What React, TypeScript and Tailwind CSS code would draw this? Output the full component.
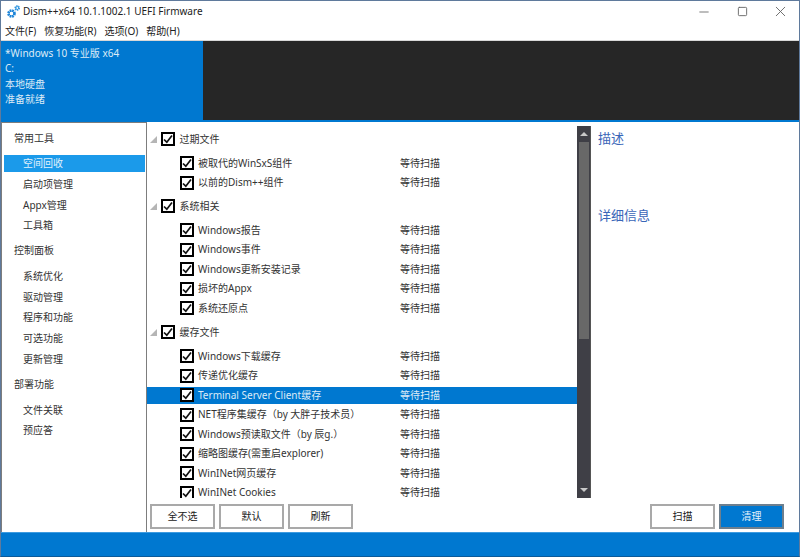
import React from 'react';
import { Minus, Square, X } from 'lucide-react';

const font = "font-['Noto_Sans','Noto_Sans_CJK_SC',sans-serif]";

const sidebar = [
  { title: '常用工具', items: ['空间回收', '启动项管理', 'Appx管理', '工具箱'] },
  { title: '控制面板', items: ['系统优化', '驱动管理', '程序和功能', '可选功能', '更新管理'] },
  { title: '部署功能', items: ['文件关联', '预应答'] },
];

const groups = [
  { title: '过期文件', items: ['被取代的WinSxS组件', '以前的Dism++组件'] },
  { title: '系统相关', items: ['Windows报告', 'Windows事件', 'Windows更新安装记录', '损坏的Appx', '系统还原点'] },
  {
    title: '缓存文件',
    items: [
      'Windows下载缓存',
      '传递优化缓存',
      'Terminal Server Client缓存',
      'NET程序集缓存（by 大胖子技术员）',
      'Windows预读取文件（by 辰g.）',
      '缩略图缓存(需重启explorer)',
      'WinINet网页缓存',
      'WinINet Cookies',
    ],
  },
];

const Check = () => (
  <span className="w-[14px] h-[14px] shrink-0 border-2 border-black bg-white flex items-center justify-center">
    <svg width="10" height="10" viewBox="0 0 10 10" fill="none">
      <path d="M1 5.5 L3.8 8.2 L9 1.5" stroke="#111" strokeWidth="1.7" />
    </svg>
  </span>
);

const Logo = () => (
  <svg width="13" height="13" viewBox="0 0 13 13" fill="none">
    <circle cx="4.5" cy="8.5" r="3" stroke="#1c84d8" strokeWidth="2.6" strokeDasharray="1.6 0.8" />
    <circle cx="4.5" cy="8.5" r="2.4" stroke="#1c84d8" strokeWidth="1" />
    <circle cx="10.2" cy="3" r="1.9" stroke="#2f95e0" strokeWidth="1.8" strokeDasharray="1.2 0.6" />
    <circle cx="10.2" cy="3" r="1.5" stroke="#2f95e0" strokeWidth="0.8" />
  </svg>
);

const Btn = ({ label, primary }: { label: string; primary?: boolean }) => (
  <button
    className={`w-[65px] h-[25px] border-2 text-[10px] flex items-center justify-center ${
      primary ? 'bg-[#0078d0] border-[#6d7f8e] text-[#e4f1fb]' : 'bg-white border-[#a9a9a9] text-[#222]'
    }`}
  >
    {label}
  </button>
);

export default function App() {
  return (
    <div className={`w-[800px] h-[557px] flex flex-col bg-white overflow-hidden border border-[#5f7a9c] border-b-[#0a5a9a] ${font}`}>
      {/* title bar */}
      <div className="h-[21px] flex items-center shrink-0 pl-[6px] text-[10px] text-[#222]">
        <Logo />
        <span className="ml-[3px]">Dism++x64 10.1.1002.1 UEFI Firmware</span>
        <div className="ml-auto flex items-center">
          <div className="w-[38px] flex justify-center text-[#a8a8a8]">
            <Minus size={14} strokeWidth={2.8} />
          </div>
          <div className="w-[38px] flex justify-center text-[#666]">
            <Square size={11} strokeWidth={2} />
          </div>
          <div className="w-[38px] flex justify-center text-[#666]">
            <X size={17} strokeWidth={1.3} />
          </div>
        </div>
      </div>

      {/* menu */}
      <div className="h-[18px] flex items-center shrink-0 pl-[4px] gap-[8px] text-[10px] text-[#222]">
        <span>文件(F)</span>
        <span>恢复功能(R)</span>
        <span>选项(O)</span>
        <span>帮助(H)</span>
      </div>

      {/* header */}
      <div className="h-[80px] flex shrink-0 border-t border-[#d8d8d8]">
        <div className="w-[202px] bg-[#0078d0] text-[#dcebf7] text-[10px] pl-[4px] pt-[4.5px] leading-[15.5px]">
          <div>*Windows 10 专业版 x64</div>
          <div>C:</div>
          <div>本地硬盘</div>
          <div>准备就绪</div>
        </div>
        <div className="flex-1 bg-[#262626]" />
      </div>
      <div className="h-[2px] bg-[#0078d0] shrink-0" />

      {/* body */}
      <div className="flex-1 flex min-h-0">
        <div className="w-[146px] shrink-0 border-t border-x border-[#7d7d7d] pl-[2px] pr-[1px] pt-[6.5px] text-[10px] text-[#333]">
          {sidebar.map((s) => (
            <div key={s.title} className="mb-[8px]">
              <div className="h-[17px] pl-[10px] flex items-center mb-[8.5px]">{s.title}</div>
              {s.items.map((it) => (
                <div
                  key={it}
                  className={`h-[17px] mb-[3.8px] pl-[19px] flex items-center ${
                    it === '空间回收' ? 'bg-[#1b9aea] text-[#e3f2fc]' : ''
                  }`}
                >
                  {it}
                </div>
              ))}
            </div>
          ))}
        </div>

        <div className="flex-1 flex flex-col min-w-0">
          <div className="flex flex-1 min-h-0">
            <div className="w-[430px] h-[372px] shrink-0 mt-[4px] pt-[3px] overflow-hidden text-[10px] text-[#333]">
              {groups.map((g) => (
                <div key={g.title} className="mb-[5.25px]">
                  <div className="h-[20px] flex items-center mb-[5.5px]">
                    <svg width="7" height="7" viewBox="0 0 7 7" className="ml-[3px] mr-[3.5px]">
                      <path d="M0 7 L7 7 L7 0 Z" fill="#b5b5b5" />
                    </svg>
                    <Check />
                    <span className="ml-[5px]">{g.title}</span>
                  </div>
                  {g.items.map((it) => (
                    <div
                      key={it}
                      className={`h-[17px] mb-[2.5px] flex items-center pl-[33px] ${
                        it.startsWith('Terminal') ? 'bg-[#0078d0] text-[#dcebf7]' : ''
                      }`}
                    >
                      <Check />
                      <span className="ml-[4px] w-[202px] shrink-0 whitespace-nowrap">{it}</span>
                      <span>等待扫描</span>
                    </div>
                  ))}
                </div>
              ))}
            </div>

            {/* scrollbar */}
            <div className="w-[14px] h-[372px] mt-[4px] shrink-0 bg-[#3f3f46] border-r border-[#555] flex flex-col items-center">
              <div className="h-[16px] flex items-center justify-center">
                <div className="w-0 h-0 border-x-[4px] border-x-transparent border-b-[4px] border-b-[#c8c8c8]" />
              </div>
              <div className="w-[10px] h-[197px] bg-[#686868]" />
              <div className="mt-auto h-[16px] flex items-center justify-center">
                <div className="w-0 h-0 border-x-[4px] border-x-transparent border-t-[4px] border-t-[#c8c8c8]" />
              </div>
            </div>

            <div className="flex-1 pl-[7px] pt-[6px] text-[13px] leading-[20px] text-[#3a66b8]">
              <div className="mb-[57px]">描述</div>
              <div>详细信息</div>
            </div>
          </div>

          {/* buttons */}
          <div className="h-[34px] shrink-0 flex items-start pt-[6px] pl-[3px] pr-[15px] gap-[4px]">
            <Btn label="全不选" />
            <Btn label="默认" />
            <Btn label="刷新" />
            <div className="flex-1" />
            <Btn label="扫描" />
            <Btn label="清理" primary />
          </div>
        </div>
      </div>

      {/* status bar */}
      <div className="h-[24px] bg-[#0078d0] shrink-0 border-t border-[#3d9be0]" />
    </div>
  );
}
